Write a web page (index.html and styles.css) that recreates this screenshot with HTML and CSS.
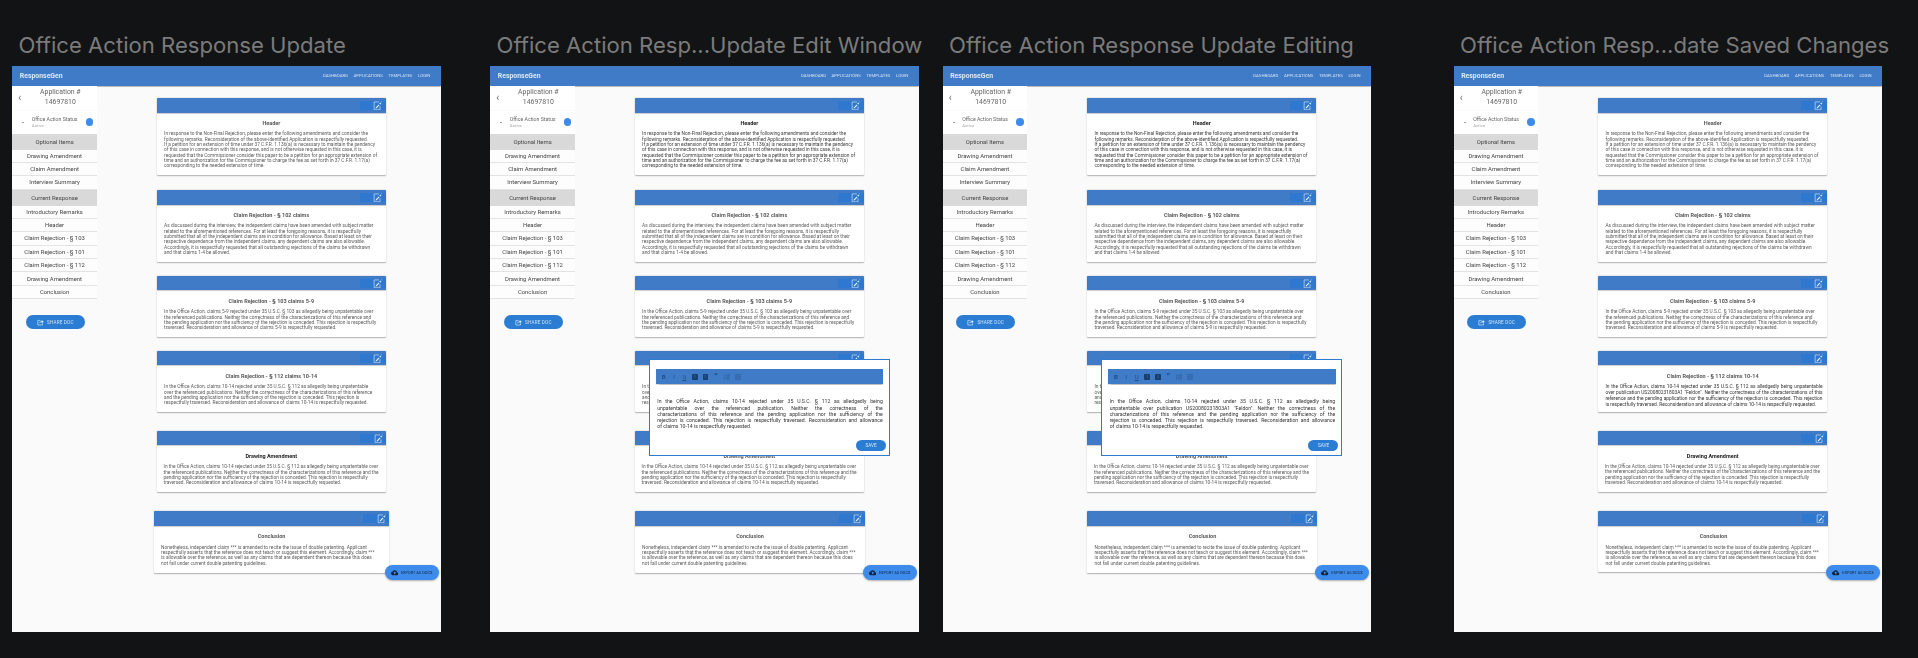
FILE: index.html
```html
<!DOCTYPE html>
<html lang="en">
<head>
    <meta charset="UTF-8">
    <title>Office Action Response Update</title>
    <link rel="stylesheet" href="styles.css">
</head>
<body>
    <svg class="sprite" width="0" height="0">
        <symbol id="edit-note" viewBox="0 0 10 10">
            <path d="M6.4 1H1.2v8.2h6.2V5.6" fill="none" stroke="currentColor" stroke-width=".6"/>
            <path d="M2.8 7.8l.2-1 3-3 .8.8-3 3z" fill="currentColor"/>
            <path d="M7.6 1.4l.4.9.9.4-.9.4-.4.9-.4-.9-.9-.4.9-.4zM9.2.2l.2.5.5.2-.5.2-.2.5-.2-.5-.5-.2.5-.2z" fill="currentColor"/>
        </symbol>
        <symbol id="share" viewBox="0 0 10 10">
            <path d="M5 2H1.2v6.6h6.6V6" fill="none" stroke="currentColor" stroke-width=".9"/>
            <path d="M3.2 6.4C3.4 4.2 5 3.2 6.8 3.2V1.4L9.6 3.8 6.8 6.2V4.5C5.2 4.5 4 5 3.2 6.4z" fill="currentColor"/>
        </symbol>
        <symbol id="cloud" viewBox="0 0 24 24">
            <path d="M19.35 10.04A7.49 7.49 0 0 0 12 4a7.5 7.5 0 0 0-6.65 4.04A6 6 0 0 0 6 20h13a5 5 0 0 0 .35-9.96zM14 13v4h-4v-4H7l5-5 5 5h-3z" fill="currentColor"/>
        </symbol>
        <symbol id="list-dots" viewBox="0 0 8 8">
            <path d="M2.4 1.4H8M2.4 4H8M2.4 6.6H8" stroke="currentColor" stroke-width=".7"/>
            <path d="M0 1h1v1H0zM0 3.5h1v1H0zM0 6h1v1H0z" fill="currentColor"/>
        </symbol>
        <symbol id="list-lines" viewBox="0 0 8 8">
            <path d="M0 1.2h8M0 4h8M0 6.8h8" stroke="currentColor" stroke-width=".8"/>
        </symbol>
    </svg>

    <!-- first frame -->
    <section class="artboard artboard-1">
        <h2 class="artboard-title">Office Action Response Update</h2>
        <div class="frame">
            <header class="topbar">
                <span class="brand">ResponseGen</span>
                <nav class="topnav"><a>Dashboard</a><a>Applications</a><a>Templates</a><a>Login</a></nav>
            </header>
            <div class="layout">
                <aside class="sidebar">
                    <div class="app-head"><span class="back">&#8249;</span><span class="app-name">Application #<br>14697810</span></div>
                    <div class="status"><span class="caret"></span><div class="status-text"><span>Office Action Status</span><small>Active</small></div><span class="status-dot"></span></div>
                    <div class="side-section">Optional Items</div>
                    <div class="side-row">Drawing Amendment</div>
                    <div class="side-row">Claim Amendment</div>
                    <div class="side-row">Interview Summary</div>
                    <div class="side-section">Current Response</div>
                    <div class="side-row">Introductory Remarks</div>
                    <div class="side-row">Header</div>
                    <div class="side-row">Claim Rejection - § 103</div>
                    <div class="side-row">Claim Rejection - § 101</div>
                    <div class="side-row">Claim Rejection - § 112</div>
                    <div class="side-row">Drawing Amendment</div>
                    <div class="side-row">Conclusion</div>
                    <button class="share-btn"><svg class="share-icon"><use href="#share"/></svg>Share Doc</button>
                </aside>
                <main class="cards">
                    <article class="card card-header">
                        <div class="card-bar"><span class="edit-btn"><svg class="edit-icon"><use href="#edit-note"/></svg></span></div>
                        <div class="card-body">
                            <h3>Header</h3>
                            <p>In response to the Non-Final Rejection, please enter the following amendments and consider the following remarks. Reconsideration of the above-identified Application is respectfully requested.<br>If a petition for an extension of time under 37 C.F.R. 1.136(a) is necessary to maintain the pendency of this case in connection with this response, and is not otherwise requested in this case, it is requested that the Commissioner consider this paper to be a petition for an appropriate extension of time and an authorization for the Commissioner to charge the fee as set forth in 37 C.F.R. 1.17(a) corresponding to the needed extension of time.</p>
                        </div>
                    </article>
                    <article class="card card-102">
                        <div class="card-bar"><span class="edit-btn"><svg class="edit-icon"><use href="#edit-note"/></svg></span></div>
                        <div class="card-body">
                            <h3>Claim Rejection - § 102 claims</h3>
                            <p>As discussed during the interview, the independent claims have been amended with subject matter related to the aforementioned references. For at least the foregoing reasons, it is respectfully submitted that all of the independent claims are in condition for allowance. Based at least on their respective dependence from the independent claims, any dependent claims are also allowable. Accordingly, it is respectfully requested that all outstanding rejections of the claims be withdrawn and that claims 1-4 be allowed.</p>
                        </div>
                    </article>
                    <article class="card card-103">
                        <div class="card-bar"><span class="edit-btn"><svg class="edit-icon"><use href="#edit-note"/></svg></span></div>
                        <div class="card-body">
                            <h3>Claim Rejection - § 103 claims 5-9</h3>
                            <p>In the Office Action, claims 5-9 rejected under 35 U.S.C. § 103 as allegedly being unpatentable over the referenced publications. Neither the correctness of the characterizations of this reference and the pending application nor the sufficiency of the rejection is conceded. This rejection is respectfully traversed. Reconsideration and allowance of claims 5-9 is respectfully requested.</p>
                        </div>
                    </article>
                    <article class="card card-112">
                        <div class="card-bar"><span class="edit-btn"><svg class="edit-icon"><use href="#edit-note"/></svg></span></div>
                        <div class="card-body">
                            <h3>Claim Rejection - § 112 claims 10-14</h3>
                            <p>In the Office Action, claims 10-14 rejected under 35 U.S.C. § 112 as allegedly being unpatentable over the referenced publications. Neither the correctness of the characterizations of this reference and the pending application nor the sufficiency of the rejection is conceded. This rejection is respectfully traversed. Reconsideration and allowance of claims 10-14 is respectfully requested.</p>
                        </div>
                    </article>
                    <article class="card card-drawing">
                        <div class="card-bar"><span class="edit-btn"><svg class="edit-icon"><use href="#edit-note"/></svg></span></div>
                        <div class="card-body">
                            <h3 class="title-dark">Drawing Amendment</h3>
                            <p>In the Office Action, claims 10-14 rejected under 35 U.S.C. § 112 as allegedly being unpatentable over the referenced publications. Neither the correctness of the characterizations of this reference and the pending application nor the sufficiency of the rejection is conceded. This rejection is respectfully traversed. Reconsideration and allowance of claims 10-14 is respectfully requested.</p>
                        </div>
                    </article>
                    <article class="card card-conclusion card-conclusion-wide">
                        <div class="card-bar"><span class="edit-btn"><svg class="edit-icon"><use href="#edit-note"/></svg></span></div>
                        <div class="card-body">
                            <h3>Conclusion</h3>
                            <p>Nonetheless, independent claim *** is amended to recite the issue of double patenting. Applicant respectfully asserts that the reference does not teach or suggest this element. Accordingly, claim *** is allowable over the reference, as well as any claims that are dependent thereon because this does not fall under current double patenting guidelines.</p>
                        </div>
                    </article>
                </main>
            </div>
            <button class="export-btn"><svg class="cloud-icon"><use href="#cloud"/></svg>Export as docx</button>
        </div>
    </section>

    <!-- edit window -->
    <section class="artboard artboard-2">
        <h2 class="artboard-title">Office Action Resp...Update Edit Window</h2>
        <div class="frame">
            <header class="topbar">
                <span class="brand">ResponseGen</span>
                <nav class="topnav"><a>Dashboard</a><a>Applications</a><a>Templates</a><a>Login</a></nav>
            </header>
            <div class="layout">
                <aside class="sidebar">
                    <div class="app-head"><span class="back">&#8249;</span><span class="app-name">Application #<br>14697810</span></div>
                    <div class="status"><span class="caret"></span><div class="status-text"><span>Office Action Status</span><small>Active</small></div><span class="status-dot"></span></div>
                    <div class="side-section">Optional Items</div>
                    <div class="side-row">Drawing Amendment</div>
                    <div class="side-row">Claim Amendment</div>
                    <div class="side-row">Interview Summary</div>
                    <div class="side-section">Current Response</div>
                    <div class="side-row">Introductory Remarks</div>
                    <div class="side-row">Header</div>
                    <div class="side-row">Claim Rejection - § 103</div>
                    <div class="side-row">Claim Rejection - § 101</div>
                    <div class="side-row">Claim Rejection - § 112</div>
                    <div class="side-row">Drawing Amendment</div>
                    <div class="side-row">Conclusion</div>
                    <button class="share-btn"><svg class="share-icon"><use href="#share"/></svg>Share Doc</button>
                </aside>
                <main class="cards">
                    <article class="card card-header">
                        <div class="card-bar"><span class="edit-btn"><svg class="edit-icon"><use href="#edit-note"/></svg></span></div>
                        <div class="card-body">
                            <h3 class="title-dark">Header</h3>
                            <p class="text-dark">In response to the Non-Final Rejection, please enter the following amendments and consider the following remarks. Reconsideration of the above-identified Application is respectfully requested.<br>If a petition for an extension of time under 37 C.F.R. 1.136(a) is necessary to maintain the pendency of this case in connection with this response, and is not otherwise requested in this case, it is requested that the Commissioner consider this paper to be a petition for an appropriate extension of time and an authorization for the Commissioner to charge the fee as set forth in 37 C.F.R. 1.17(a) corresponding to the needed extension of time.</p>
                        </div>
                    </article>
                    <article class="card card-102">
                        <div class="card-bar"><span class="edit-btn"><svg class="edit-icon"><use href="#edit-note"/></svg></span></div>
                        <div class="card-body">
                            <h3>Claim Rejection - § 102 claims</h3>
                            <p>As discussed during the interview, the independent claims have been amended with subject matter related to the aforementioned references. For at least the foregoing reasons, it is respectfully submitted that all of the independent claims are in condition for allowance. Based at least on their respective dependence from the independent claims, any dependent claims are also allowable. Accordingly, it is respectfully requested that all outstanding rejections of the claims be withdrawn and that claims 1-4 be allowed.</p>
                        </div>
                    </article>
                    <article class="card card-103">
                        <div class="card-bar"><span class="edit-btn"><svg class="edit-icon"><use href="#edit-note"/></svg></span></div>
                        <div class="card-body">
                            <h3>Claim Rejection - § 103 claims 5-9</h3>
                            <p>In the Office Action, claims 5-9 rejected under 35 U.S.C. § 103 as allegedly being unpatentable over the referenced publications. Neither the correctness of the characterizations of this reference and the pending application nor the sufficiency of the rejection is conceded. This rejection is respectfully traversed. Reconsideration and allowance of claims 5-9 is respectfully requested.</p>
                        </div>
                    </article>
                    <article class="card card-112">
                        <div class="card-bar"><span class="edit-btn"><svg class="edit-icon"><use href="#edit-note"/></svg></span></div>
                        <div class="card-body">
                            <h3>Claim Rejection - § 112 claims 10-14</h3>
                            <p>In the Office Action, claims 10-14 rejected under 35 U.S.C. § 112 as allegedly being unpatentable over the referenced publications. Neither the correctness of the characterizations of this reference and the pending application nor the sufficiency of the rejection is conceded. This rejection is respectfully traversed. Reconsideration and allowance of claims 10-14 is respectfully requested.</p>
                        </div>
                    </article>
                    <article class="card card-drawing">
                        <div class="card-bar"><span class="edit-btn"><svg class="edit-icon"><use href="#edit-note"/></svg></span></div>
                        <div class="card-body">
                            <h3>Drawing Amendment</h3>
                            <p>In the Office Action, claims 10-14 rejected under 35 U.S.C. § 112 as allegedly being unpatentable over the referenced publications. Neither the correctness of the characterizations of this reference and the pending application nor the sufficiency of the rejection is conceded. This rejection is respectfully traversed. Reconsideration and allowance of claims 10-14 is respectfully requested.</p>
                        </div>
                    </article>
                    <article class="card card-conclusion">
                        <div class="card-bar"><span class="edit-btn"><svg class="edit-icon"><use href="#edit-note"/></svg></span></div>
                        <div class="card-body">
                            <h3>Conclusion</h3>
                            <p>Nonetheless, independent claim *** is amended to recite the issue of double patenting. Applicant respectfully asserts that the reference does not teach or suggest this element. Accordingly, claim *** is allowable over the reference, as well as any claims that are dependent thereon because this does not fall under current double patenting guidelines.</p>
                        </div>
                    </article>
                </main>
            </div>
            <div class="editor">
                <div class="toolbar">
                    <b class="tool">B</b><i class="tool">I</i><u class="tool">U</u><span class="tool-box">1</span><span class="tool-box">2</span><span class="tool tool-quote">&#8221;</span>
                    <svg class="tool-icon"><use href="#list-dots"/></svg><svg class="tool-icon"><use href="#list-lines"/></svg>
                </div>
                <p class="editor-text">
                    <span class="editor-line">In the Office Action, claims 10-14 rejected under 35 U.S.C. § 112 as alledgedly being</span>
                    <span class="editor-line">unpatentable over the referenced publication. Neither the correctness of the</span>
                    <span class="editor-line">characterizations of this reference and the pending application nor the sufficiency of the</span>
                    <span class="editor-line">rejection is conceded. This rejection is respectfully traversed. Reconsideration and allowance</span>
                    <span>of claims 10-14 is respectfully requested.</span>
                </p>
                <button class="save-btn">Save</button>
            </div>
            <button class="export-btn"><svg class="cloud-icon"><use href="#cloud"/></svg>Export as docx</button>
        </div>
    </section>

    <!-- editing -->
    <section class="artboard artboard-3">
        <h2 class="artboard-title">Office Action Response Update Editing</h2>
        <div class="frame">
            <header class="topbar">
                <span class="brand">ResponseGen</span>
                <nav class="topnav"><a>Dashboard</a><a>Applications</a><a>Templates</a><a>Login</a></nav>
            </header>
            <div class="layout">
                <aside class="sidebar">
                    <div class="app-head"><span class="back">&#8249;</span><span class="app-name">Application #<br>14697810</span></div>
                    <div class="status"><span class="caret"></span><div class="status-text"><span>Office Action Status</span><small>Active</small></div><span class="status-dot"></span></div>
                    <div class="side-section">Optional Items</div>
                    <div class="side-row">Drawing Amendment</div>
                    <div class="side-row">Claim Amendment</div>
                    <div class="side-row">Interview Summary</div>
                    <div class="side-section">Current Response</div>
                    <div class="side-row">Introductory Remarks</div>
                    <div class="side-row">Header</div>
                    <div class="side-row">Claim Rejection - § 103</div>
                    <div class="side-row">Claim Rejection - § 101</div>
                    <div class="side-row">Claim Rejection - § 112</div>
                    <div class="side-row">Drawing Amendment</div>
                    <div class="side-row">Conclusion</div>
                    <button class="share-btn"><svg class="share-icon"><use href="#share"/></svg>Share Doc</button>
                </aside>
                <main class="cards">
                    <article class="card card-header">
                        <div class="card-bar"><span class="edit-btn"><svg class="edit-icon"><use href="#edit-note"/></svg></span></div>
                        <div class="card-body">
                            <h3 class="title-dark">Header</h3>
                            <p class="text-dark">In response to the Non-Final Rejection, please enter the following amendments and consider the following remarks. Reconsideration of the above-identified Application is respectfully requested.<br>If a petition for an extension of time under 37 C.F.R. 1.136(a) is necessary to maintain the pendency of this case in connection with this response, and is not otherwise requested in this case, it is requested that the Commissioner consider this paper to be a petition for an appropriate extension of time and an authorization for the Commissioner to charge the fee as set forth in 37 C.F.R. 1.17(a) corresponding to the needed extension of time.</p>
                        </div>
                    </article>
                    <article class="card card-102">
                        <div class="card-bar"><span class="edit-btn"><svg class="edit-icon"><use href="#edit-note"/></svg></span></div>
                        <div class="card-body">
                            <h3>Claim Rejection - § 102 claims</h3>
                            <p>As discussed during the interview, the independent claims have been amended with subject matter related to the aforementioned references. For at least the foregoing reasons, it is respectfully submitted that all of the independent claims are in condition for allowance. Based at least on their respective dependence from the independent claims, any dependent claims are also allowable. Accordingly, it is respectfully requested that all outstanding rejections of the claims be withdrawn and that claims 1-4 be allowed.</p>
                        </div>
                    </article>
                    <article class="card card-103">
                        <div class="card-bar"><span class="edit-btn"><svg class="edit-icon"><use href="#edit-note"/></svg></span></div>
                        <div class="card-body">
                            <h3>Claim Rejection - § 103 claims 5-9</h3>
                            <p>In the Office Action, claims 5-9 rejected under 35 U.S.C. § 103 as allegedly being unpatentable over the referenced publications. Neither the correctness of the characterizations of this reference and the pending application nor the sufficiency of the rejection is conceded. This rejection is respectfully traversed. Reconsideration and allowance of claims 5-9 is respectfully requested.</p>
                        </div>
                    </article>
                    <article class="card card-112">
                        <div class="card-bar"><span class="edit-btn"><svg class="edit-icon"><use href="#edit-note"/></svg></span></div>
                        <div class="card-body">
                            <h3>Claim Rejection - § 112 claims 10-14</h3>
                            <p>In the Office Action, claims 10-14 rejected under 35 U.S.C. § 112 as allegedly being unpatentable over the referenced publications. Neither the correctness of the characterizations of this reference and the pending application nor the sufficiency of the rejection is conceded. This rejection is respectfully traversed. Reconsideration and allowance of claims 10-14 is respectfully requested.</p>
                        </div>
                    </article>
                    <article class="card card-drawing">
                        <div class="card-bar"><span class="edit-btn"><svg class="edit-icon"><use href="#edit-note"/></svg></span></div>
                        <div class="card-body">
                            <h3>Drawing Amendment</h3>
                            <p>In the Office Action, claims 10-14 rejected under 35 U.S.C. § 112 as allegedly being unpatentable over the referenced publications. Neither the correctness of the characterizations of this reference and the pending application nor the sufficiency of the rejection is conceded. This rejection is respectfully traversed. Reconsideration and allowance of claims 10-14 is respectfully requested.</p>
                        </div>
                    </article>
                    <article class="card card-conclusion">
                        <div class="card-bar"><span class="edit-btn"><svg class="edit-icon"><use href="#edit-note"/></svg></span></div>
                        <div class="card-body">
                            <h3>Conclusion</h3>
                            <p>Nonetheless, independent claim *** is amended to recite the issue of double patenting. Applicant respectfully asserts that the reference does not teach or suggest this element. Accordingly, claim *** is allowable over the reference, as well as any claims that are dependent thereon because this does not fall under current double patenting guidelines.</p>
                        </div>
                    </article>
                </main>
            </div>
            <div class="editor">
                <div class="toolbar">
                    <b class="tool">B</b><i class="tool">I</i><u class="tool">U</u><span class="tool-box">1</span><span class="tool-box">2</span><span class="tool tool-quote">&#8221;</span>
                    <svg class="tool-icon"><use href="#list-dots"/></svg><svg class="tool-icon"><use href="#list-lines"/></svg>
                </div>
                <p class="editor-text">
                    <span class="editor-line">In the Office Action, claims 10-14 rejected under 35 U.S.C. § 112 as alledgedly being</span>
                    <span class="editor-line">unpatentable over publication US20080231803A1 "Feldon". Neither the correctness of the</span>
                    <span class="editor-line">characterizations of this reference and the pending application nor the sufficiency of the</span>
                    <span class="editor-line">rejection is conceded. This rejection is respectfully traversed. Reconsideration and allowance</span>
                    <span>of claims 10-14 is respectfully requested.</span>
                </p>
                <button class="save-btn">Save</button>
            </div>
            <button class="export-btn"><svg class="cloud-icon"><use href="#cloud"/></svg>Export as docx</button>
        </div>
    </section>

    <!-- saved changes -->
    <section class="artboard artboard-4">
        <h2 class="artboard-title">Office Action Resp...date Saved Changes</h2>
        <div class="frame">
            <header class="topbar">
                <span class="brand">ResponseGen</span>
                <nav class="topnav"><a>Dashboard</a><a>Applications</a><a>Templates</a><a>Login</a></nav>
            </header>
            <div class="layout">
                <aside class="sidebar">
                    <div class="app-head"><span class="back">&#8249;</span><span class="app-name">Application #<br>14697810</span></div>
                    <div class="status"><span class="caret"></span><div class="status-text"><span>Office Action Status</span><small>Active</small></div><span class="status-dot"></span></div>
                    <div class="side-section">Optional Items</div>
                    <div class="side-row">Drawing Amendment</div>
                    <div class="side-row">Claim Amendment</div>
                    <div class="side-row">Interview Summary</div>
                    <div class="side-section">Current Response</div>
                    <div class="side-row">Introductory Remarks</div>
                    <div class="side-row">Header</div>
                    <div class="side-row">Claim Rejection - § 103</div>
                    <div class="side-row">Claim Rejection - § 101</div>
                    <div class="side-row">Claim Rejection - § 112</div>
                    <div class="side-row">Drawing Amendment</div>
                    <div class="side-row">Conclusion</div>
                    <button class="share-btn"><svg class="share-icon"><use href="#share"/></svg>Share Doc</button>
                </aside>
                <main class="cards">
                    <article class="card card-header">
                        <div class="card-bar"><span class="edit-btn"><svg class="edit-icon"><use href="#edit-note"/></svg></span></div>
                        <div class="card-body">
                            <h3>Header</h3>
                            <p>In response to the Non-Final Rejection, please enter the following amendments and consider the following remarks. Reconsideration of the above-identified Application is respectfully requested.<br>If a petition for an extension of time under 37 C.F.R. 1.136(a) is necessary to maintain the pendency of this case in connection with this response, and is not otherwise requested in this case, it is requested that the Commissioner consider this paper to be a petition for an appropriate extension of time and an authorization for the Commissioner to charge the fee as set forth in 37 C.F.R. 1.17(a) corresponding to the needed extension of time.</p>
                        </div>
                    </article>
                    <article class="card card-102">
                        <div class="card-bar"><span class="edit-btn"><svg class="edit-icon"><use href="#edit-note"/></svg></span></div>
                        <div class="card-body">
                            <h3>Claim Rejection - § 102 claims</h3>
                            <p>As discussed during the interview, the independent claims have been amended with subject matter related to the aforementioned references. For at least the foregoing reasons, it is respectfully submitted that all of the independent claims are in condition for allowance. Based at least on their respective dependence from the independent claims, any dependent claims are also allowable. Accordingly, it is respectfully requested that all outstanding rejections of the claims be withdrawn and that claims 1-4 be allowed.</p>
                        </div>
                    </article>
                    <article class="card card-103">
                        <div class="card-bar"><span class="edit-btn"><svg class="edit-icon"><use href="#edit-note"/></svg></span></div>
                        <div class="card-body">
                            <h3>Claim Rejection - § 103 claims 5-9</h3>
                            <p>In the Office Action, claims 5-9 rejected under 35 U.S.C. § 103 as allegedly being unpatentable over the referenced publications. Neither the correctness of the characterizations of this reference and the pending application nor the sufficiency of the rejection is conceded. This rejection is respectfully traversed. Reconsideration and allowance of claims 5-9 is respectfully requested.</p>
                        </div>
                    </article>
                    <article class="card card-112">
                        <div class="card-bar"><span class="edit-btn"><svg class="edit-icon"><use href="#edit-note"/></svg></span></div>
                        <div class="card-body">
                            <h3>Claim Rejection - § 112 claims 10-14</h3>
                            <p class="text-saved">In the Office Action, claims 10-14 rejected under 35 U.S.C. § 112 as alledgedly being unpatentable over publication US20080231803A1 "Feldon". Neither the correctness of the characterizations of this reference and the pending application nor the sufficiency of the rejection is conceded. This rejection is respectfully traversed. Reconsideration and allowance of claims 10-14 is respectfully requested.</p>
                        </div>
                    </article>
                    <article class="card card-drawing">
                        <div class="card-bar"><span class="edit-btn"><svg class="edit-icon"><use href="#edit-note"/></svg></span></div>
                        <div class="card-body">
                            <h3 class="title-dark">Drawing Amendment</h3>
                            <p>In the Office Action, claims 10-14 rejected under 35 U.S.C. § 112 as allegedly being unpatentable over the referenced publications. Neither the correctness of the characterizations of this reference and the pending application nor the sufficiency of the rejection is conceded. This rejection is respectfully traversed. Reconsideration and allowance of claims 10-14 is respectfully requested.</p>
                        </div>
                    </article>
                    <article class="card card-conclusion">
                        <div class="card-bar"><span class="edit-btn"><svg class="edit-icon"><use href="#edit-note"/></svg></span></div>
                        <div class="card-body">
                            <h3>Conclusion</h3>
                            <p>Nonetheless, independent claim *** is amended to recite the issue of double patenting. Applicant respectfully asserts that the reference does not teach or suggest this element. Accordingly, claim *** is allowable over the reference, as well as any claims that are dependent thereon because this does not fall under current double patenting guidelines.</p>
                        </div>
                    </article>
                </main>
            </div>
            <button class="export-btn"><svg class="cloud-icon"><use href="#cloud"/></svg>Export as docx</button>
        </div>
    </section>
</body>
</html>
```

FILE: styles.css
```css
html, body {
    margin: 0;
    height: 658px;
    overflow: hidden;
    background: #121315;
}

body {
    position: relative;
    font-family: Roboto, "Liberation Sans", sans-serif;
}

.sprite {
    position: absolute;
}

/* artboards sit on a free canvas */
.artboard {
    position: absolute;
    top: 0;
    width: 428.5px;
}

.artboard-1 { left: 12.3px; }
.artboard-2 { left: 490.3px; }
.artboard-3 { left: 942.7px; }
.artboard-4 { left: 1453.7px; }

.artboard-title {
    height: 66px;
    margin: 0;
    padding-left: 6.3px;
    box-sizing: border-box;
    font-family: Inter, sans-serif;
    font-size: 22.1px;
    font-weight: 400;
    line-height: 91px;
    color: #7b7b7b;
    white-space: nowrap;
}

.frame {
    position: relative;
    height: 566px;
    background: #fafafa;
    overflow: hidden;
    filter: blur(.3px);
}

.topbar {
    display: flex;
    align-items: center;
    justify-content: space-between;
    height: 19.6px;
    padding: 0 10.5px 0 7.5px;
    background: #3f7bc6;
    box-shadow: 0 .5px 1px rgba(0, 0, 0, .25);
}

.brand {
    font-size: 6.9px;
    font-weight: 700;
    color: #dde8f5;
}

.topnav {
    display: flex;
    gap: 5.6px;
}

.topnav a {
    font-size: 4.3px;
    text-transform: uppercase;
    color: #d3e1f2;
}

.layout {
    display: flex;
}

.sidebar {
    width: 84.5px;
    flex-shrink: 0;
    color: #444;
}

.app-head {
    display: flex;
    align-items: center;
    height: 24px;
    background: #fff;
}

.back {
    width: 19px;
    padding-left: 6px;
    box-sizing: border-box;
    font-size: 10px;
    color: #666;
}

.app-name {
    width: 58px;
    font-size: 6.9px;
    line-height: 9.2px;
    text-align: center;
    color: #666;
}

.status {
    display: flex;
    align-items: center;
    height: 23px;
    margin-top: 1px;
    background: #fff;
}

.caret {
    width: 0;
    margin: 0 7.5px 0 10px;
    border: 1.3px solid transparent;
    border-top: 1.8px solid #444;
    border-bottom: 0;
}

.status-text {
    flex: 1;
    display: flex;
    flex-direction: column;
    gap: 1.4px;
    font-size: 5.2px;
    color: #666;
}

.status-text small {
    font-size: 4.4px;
    color: #aaa;
}

.status-dot {
    width: 7.6px;
    height: 7.6px;
    margin-right: 3.6px;
    border-radius: 50%;
    background: #3d8bea;
}

.side-section {
    display: flex;
    align-items: center;
    justify-content: center;
    height: 16px;
    font-size: 5.9px;
    background: #d9d9d9;
}

.side-row {
    display: flex;
    align-items: center;
    justify-content: center;
    height: 13.35px;
    box-sizing: border-box;
    border-bottom: .8px solid #e3e3e3;
    font-size: 5.9px;
    background: #fdfdfd;
}

.share-btn {
    display: flex;
    align-items: center;
    justify-content: center;
    gap: 3px;
    width: 59px;
    height: 14px;
    margin: 16.4px 0 0 13.5px;
    padding: 0;
    border: 0;
    border-radius: 7px;
    font-family: inherit;
    font-size: 4.6px;
    text-transform: uppercase;
    letter-spacing: .2px;
    color: #cfe2f6;
    background: #2a7dd3;
}

.share-icon {
    width: 7px;
    height: 7px;
    color: #e3eefa;
}

.cards {
    padding: 12.4px 0 0 60.3px;
}

.card {
    width: 228.5px;
    background: #fff;
    border-radius: 1px;
    box-shadow: 0 .6px 1.4px rgba(0, 0, 0, .3);
}

.card-header { margin-bottom: 14.8px; }
.card-102 { margin-bottom: 14.1px; }
.card-103 { margin-bottom: 13.8px; }
.card-112 { margin-bottom: 18.8px; }
.card-drawing { width: 229.5px; margin: 0 0 19.3px -.5px; }
.card-conclusion { width: 230px; }
.card-conclusion-wide { width: 235px; margin-left: -3px; }

.card-bar {
    display: flex;
    justify-content: flex-end;
    align-items: center;
    height: 14.6px;
    background: #3f7bc6;
    border-radius: 1px 1px 0 0;
    box-shadow: 0 .5px 1px rgba(0, 0, 0, .2);
}

.edit-btn {
    display: flex;
    justify-content: flex-end;
    align-items: center;
    width: 26px;
    height: 9px;
    padding-right: 3px;
    box-sizing: border-box;
    background: #2e78cf;
}

.edit-icon {
    width: 9.5px;
    height: 9.5px;
    margin-top: .8px;
    color: #f4f7fb;
}

.card-body {
    padding: 6.4px 7px 6.5px;
}

.card-body h3 {
    margin: 0 0 4.4px;
    font-size: 5.5px;
    line-height: 8px;
    font-weight: 700;
    text-align: center;
    color: #5a5a5a;
}

.card-body h3.title-dark {
    color: #222;
}

.card-body p {
    margin: 0;
    font-size: 4.8px;
    line-height: 5.33px;
    color: #5c5c5c;
}

.card-conclusion .card-body p {
    max-width: 214.5px;
}

.card-body p.text-dark {
    color: #3c3c3c;
}

.card-body p.text-saved {
    margin: 0 -2.5px -2.4px 0;
    font-size: 4.85px;
    line-height: 5.9px;
    text-align: justify;
    color: #333;
}

/* edit popup, lies over the cards */
.editor {
    position: absolute;
    left: 158.8px;
    top: 293.3px;
    width: 241px;
    height: 97px;
    box-sizing: border-box;
    padding: 9px 5.8px 0;
    background: #fff;
    border: 1px solid #2f7bd0;
}

.toolbar {
    display: flex;
    align-items: center;
    gap: 5px;
    height: 15px;
    padding-left: 5px;
    background: #3f7bc6;
    box-shadow: 0 .5px 1px rgba(0, 0, 0, .25);
}

.tool {
    flex: 0 0 5.4px;
    font-size: 6px;
    line-height: 6px;
    text-align: center;
    color: #1f4f8a;
}

.tool-box {
    flex: 0 0 5.6px;
    height: 5.6px;
    border-radius: .8px;
    font-size: 4px;
    line-height: 5.6px;
    text-align: center;
    color: #3f7bc6;
    background: #173f70;
}

.tool-quote {
    font-size: 9px;
    font-weight: 700;
    line-height: 6px;
}

.tool-icon {
    width: 6px;
    height: 6px;
    color: #1f4f8a;
}

.editor-text {
    margin: 14px .5px 0 1.4px;
    font-size: 5.15px;
    line-height: 6.2px;
    color: #333;
}

/* the popup's lines break where the reference breaks them */
.editor-line {
    display: block;
    text-align: justify;
    text-align-last: justify;
}

.save-btn {
    position: absolute;
    right: 3px;
    bottom: 4.5px;
    width: 30px;
    height: 11px;
    padding: 0;
    border: 0;
    border-radius: 6px;
    font-family: inherit;
    font-size: 4.6px;
    text-transform: uppercase;
    color: #d7e6f7;
    background: #2a7dd3;
}

.export-btn {
    position: absolute;
    right: 2.2px;
    top: 499px;
    display: flex;
    align-items: center;
    justify-content: center;
    gap: 2.6px;
    width: 54px;
    height: 14.5px;
    padding: 0;
    border: 0;
    border-radius: 7.5px;
    font-family: inherit;
    font-size: 3.9px;
    font-weight: 500;
    text-transform: uppercase;
    color: #1a3d66;
    background: #3d8bea;
    box-shadow: 0 .8px 2px rgba(0, 0, 0, .35);
}

.cloud-icon {
    width: 7.5px;
    height: 7.5px;
    color: #10253d;
}
```
